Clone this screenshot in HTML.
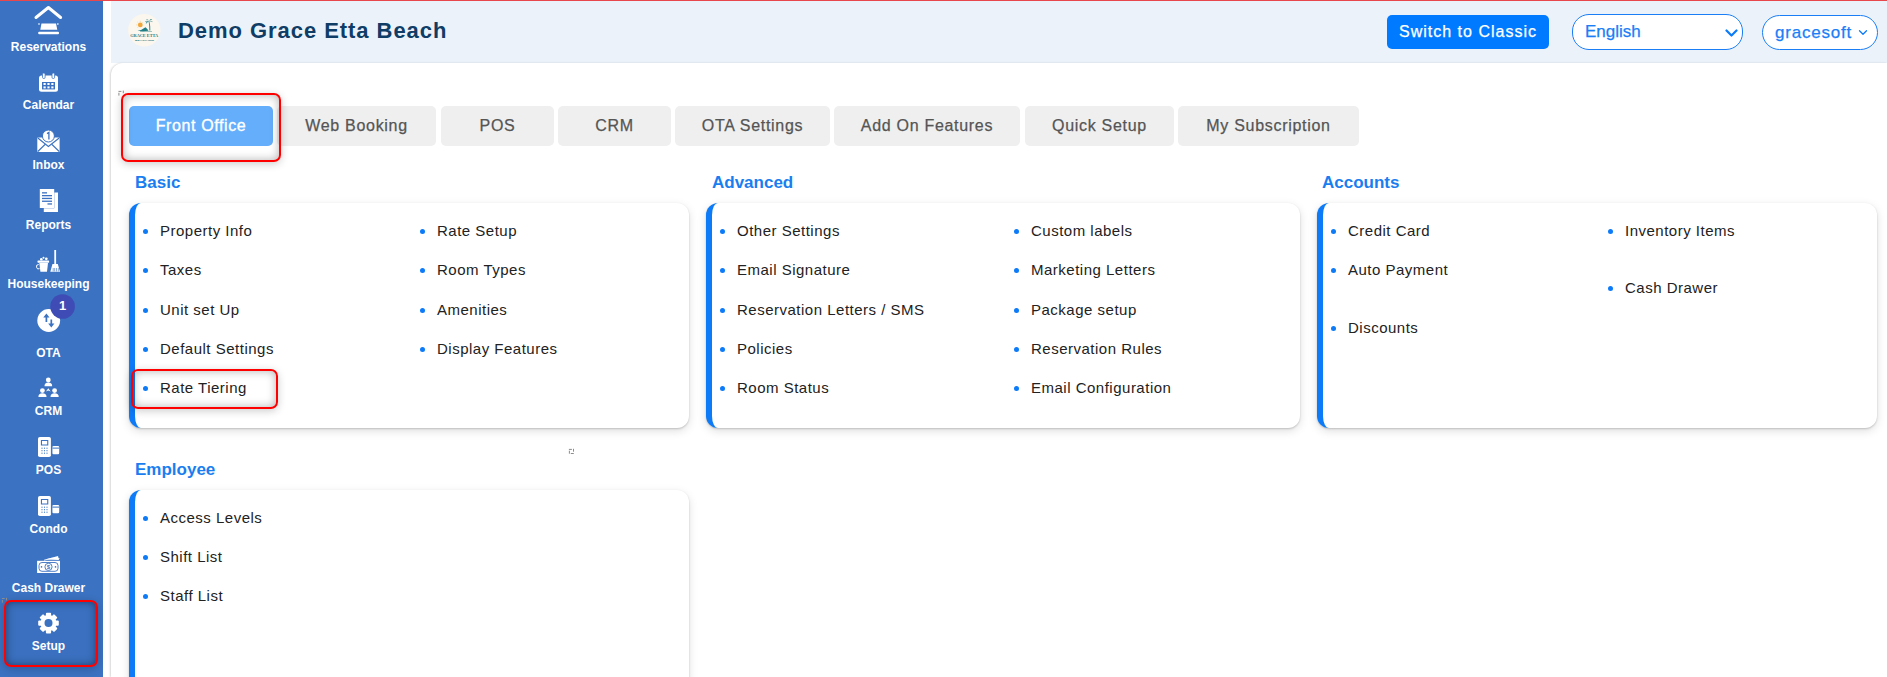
<!DOCTYPE html>
<html><head><meta charset="utf-8">
<style>
*{box-sizing:border-box;margin:0;padding:0}
html,body{width:1887px;height:677px;overflow:hidden;background:#fff;font-family:"Liberation Sans",sans-serif}
#top{position:absolute;left:0;top:0;width:1887px;height:1px;background:#e8474c}
#side{position:absolute;left:0;top:1px;width:103px;height:676px;background:#3b72c1}
.si{position:absolute;left:0;width:97px;text-align:center;color:#fff}
.si svg{position:absolute}
.lbl{position:absolute;left:0;width:97px;text-align:center;font-size:12px;font-weight:bold;color:#fff;line-height:14px;margin-top:1px}
#hdr{position:absolute;left:111px;top:1px;width:1776px;height:62px;background:#ecf2f9}
#main{position:absolute;left:111px;top:63px;width:1776px;height:614px;background:#fff;border-radius:12px 0 0 0;box-shadow:-1px 0 2px rgba(0,0,0,.16)}
.tab{position:absolute;top:106px;height:40px;background:#efefef;border-radius:5px;color:#555;font-size:16px;line-height:40px;text-align:center;letter-spacing:0.7px;-webkit-text-stroke:0.25px #555}
.sec{position:absolute;font-size:17px;font-weight:bold;color:#1a7ef0;line-height:20px}
.card{position:absolute;background:#fff;border-radius:12px;border-left:6px solid #0d7bf7;box-shadow:0 3px 10px rgba(0,0,0,.13),0 1px 2px rgba(0,0,0,.18)}
.it{position:absolute;font-size:15px;letter-spacing:0.5px;color:#222;line-height:18px;white-space:nowrap;margin-top:1px}
.it:before{content:"";position:absolute;left:-17px;top:7px;width:5px;height:5px;border-radius:50%;background:#0d7bf7}
.redbox{position:absolute;border:2.5px solid #ff0000;border-radius:7px;box-shadow:inset 0 0 10px rgba(0,0,0,.3),0 2px 8px rgba(0,0,0,.2)}
#title{position:absolute;left:178px;top:18px;font-size:22px;font-weight:bold;color:#0f3d66;letter-spacing:0.95px;line-height:26px;white-space:nowrap}
#sw{position:absolute;left:1387px;top:15px;width:162px;height:34px;background:#007bff;border-radius:5px;color:#fff;font-size:16px;line-height:34px;text-align:center;letter-spacing:1px;-webkit-text-stroke:0.25px #fff}
#lang{position:absolute;left:1572px;top:14px;width:171px;height:36px;background:#fff;border:1px solid #1a7ef7;border-radius:17px;color:#1a7ef7;font-size:17px;line-height:34px;padding-left:12px;-webkit-text-stroke:0.25px #1a7ef7}
#user{position:absolute;left:1762px;top:15px;width:116px;height:35px;background:#fff;border:1px solid #1a7ef7;border-radius:18px;color:#1a7ef7;font-size:17px;line-height:33px;padding-left:12px;letter-spacing:0.8px;-webkit-text-stroke:0.25px #1a7ef7}
#setupbox{position:absolute;left:5px;top:601px;width:92px;height:65px;border-radius:6px;background:#3a70bf;box-shadow:inset 0 0 6px rgba(0,0,0,.22)}
</style></head><body>
<div id="top"></div>
<div id="side"></div>
<svg style="position:absolute;left:0;top:0" width="103" height="677" viewBox="0 0 103 677">
<g fill="#fff" stroke="none">
<!-- reservations -->
<polyline points="36,17.5 48.4,7.5 60.6,17.5" fill="none" stroke="#fff" stroke-width="3" stroke-linecap="round" stroke-linejoin="round"/>
<path d="M41.5,23.5 H56 L57.3,29.8 H40.3 Z"/>
<rect x="38.2" y="31.8" width="20.8" height="2.4" rx="1"/>
<rect x="38.2" y="23.4" width="1.6" height="1.2"/><rect x="57" y="23.4" width="1.6" height="1.2"/>
<!-- calendar -->
<rect x="39" y="75.5" width="19" height="16.3" rx="2.5"/>
<rect x="42.5" y="73" width="2.6" height="5.5" rx="1.2" stroke="#3b72c1" stroke-width="0.8"/>
<rect x="52" y="73" width="2.6" height="5.5" rx="1.2" stroke="#3b72c1" stroke-width="0.8"/>
<rect x="42" y="82" width="13" height="7.4" fill="#3b72c1"/>
<rect x="43.5" y="83" width="2.2" height="2"/><rect x="47.4" y="83" width="2.2" height="2"/><rect x="51.3" y="83" width="2.2" height="2"/>
<rect x="43.5" y="86.4" width="2.2" height="2"/><rect x="47.4" y="86.4" width="2.2" height="2"/><rect x="51.3" y="86.4" width="2.2" height="2"/>
<!-- inbox -->
<rect x="37.3" y="137.5" width="22.3" height="14.5" rx="0.8"/>
<path d="M37.8,138 L48.4,146.5 L59.2,138 M37.8,151.5 L45,144.5 M59.2,151.5 L52,144.5" fill="none" stroke="#3b72c1" stroke-width="1.1"/>
<circle cx="48.4" cy="136" r="6" fill="#fff" stroke="#3b72c1" stroke-width="1"/>
<path d="M47,133.6 L48.9,132.4 V139.5" fill="none" stroke="#3b72c1" stroke-width="1.3"/>
<!-- reports -->
<path d="M54.3,192.5 H58 V212 H43.8 V208.2 H54.3 Z"/>
<rect x="39.8" y="189" width="14.4" height="19"/>
<g fill="#3b72c1"><rect x="42" y="192.2" width="5" height="1.3"/><rect x="42" y="195" width="10" height="1.3"/><rect x="42" y="197.8" width="10" height="1.3"/><rect x="42" y="200.6" width="10" height="1.3"/><rect x="47.5" y="203.3" width="4.5" height="1.3"/></g>
<!-- housekeeping -->
<path d="M39.3,262.9 H48 L47,271.8 H40.4 Z"/>
<rect x="37.5" y="260.5" width="11.6" height="2.2" rx="0.6"/>
<circle cx="41.3" cy="259.3" r="1.3"/><circle cx="43.5" cy="257.8" r="1"/><circle cx="46.3" cy="258.8" r="1.4"/>
<path d="M38.7,264.5 a2.2,2.2 0 1,0 0.9,4.2" fill="none" stroke="#fff" stroke-width="1"/>
<rect x="54.3" y="250" width="1.8" height="14.5"/>
<path d="M52.5,264 H57.8 L60,271.8 H50.3 Z"/>
<g fill="#3b72c1"><rect x="52.8" y="268" width="0.6" height="3.4"/><rect x="54.5" y="268" width="0.6" height="3.4"/><rect x="56.2" y="268" width="0.6" height="3.4"/><rect x="57.9" y="268" width="0.6" height="3.4"/></g>
<!-- ota -->
<circle cx="48.7" cy="320.5" r="11.4"/>
<path d="M46.4,322 V315.5 M51.3,319.5 V325.5" fill="none" stroke="#3b72c1" stroke-width="1.7"/><path d="M43.3,317.6 L46.4,313.6 L49.5,317.6 Z M48.2,323.6 L51.3,327.4 L54.4,323.6 Z" fill="#3b72c1"/>
<circle cx="62.6" cy="306.5" r="12.3" fill="#3f4cb5"/>
<!-- crm -->
<circle cx="48.3" cy="380" r="2.4"/>
<path d="M44.5,386.2 Q44.5,382.6 48.3,382.6 Q52.2,382.6 52.2,386.2 Z"/>
<circle cx="42.4" cy="390.6" r="2.4"/>
<path d="M38.4,397 Q38.4,393.3 42.4,393.3 Q46.5,393.3 46.5,397 Z"/>
<circle cx="54.6" cy="390.6" r="2.4"/>
<path d="M50.5,397 Q50.5,393.3 54.6,393.3 Q58.7,393.3 58.7,397 Z"/>
<path d="M45.9,391.6 L48.3,388.3 L50.7,391.6 L48.3,390.6 Z"/>
<!-- pos -->
<rect x="38" y="437" width="12.9" height="20" rx="1.8"/>
<rect x="40.9" y="440" width="7.4" height="5.5" fill="#3b72c1"/><rect x="42" y="441" width="5.2" height="3.5"/>
<g fill="#3b72c1"><circle cx="42" cy="448.2" r=".6"/><circle cx="44.5" cy="448.2" r=".6"/><circle cx="47" cy="448.2" r=".6"/><circle cx="42" cy="450.7" r=".6"/><circle cx="44.5" cy="450.7" r=".6"/><circle cx="47" cy="450.7" r=".6"/><circle cx="42" cy="453.2" r=".6"/><circle cx="44.5" cy="453.2" r=".6"/><circle cx="47" cy="453.2" r=".6"/></g>
<rect x="52.4" y="445.9" width="6.8" height="8.3" rx="1.2"/><rect x="52.4" y="447.6" width="6.8" height="1" fill="#3b72c1"/>
<!-- condo -->
<rect x="38" y="496" width="12.9" height="20" rx="1.8"/>
<rect x="40.9" y="499" width="7.4" height="5.5" fill="#3b72c1"/><rect x="42" y="500" width="5.2" height="3.5"/>
<g fill="#3b72c1"><circle cx="42" cy="507.2" r=".6"/><circle cx="44.5" cy="507.2" r=".6"/><circle cx="47" cy="507.2" r=".6"/><circle cx="42" cy="509.7" r=".6"/><circle cx="44.5" cy="509.7" r=".6"/><circle cx="47" cy="509.7" r=".6"/><circle cx="42" cy="512.2" r=".6"/><circle cx="44.5" cy="512.2" r=".6"/><circle cx="47" cy="512.2" r=".6"/></g>
<rect x="52.4" y="504.9" width="6.8" height="8.3" rx="1.2"/><rect x="52.4" y="506.6" width="6.8" height="1" fill="#3b72c1"/>
<!-- cash drawer -->
<path d="M45,559.5 L58,556 L59,560 Z" />
<path d="M44,560.2 Q52,557.2 59.5,558.6" fill="none" stroke="#fff" stroke-width="0.8"/>
<rect x="37.1" y="560.8" width="22.9" height="12.2"/>
<rect x="39" y="562.5" width="19" height="8.8" rx="3" fill="none" stroke="#3b72c1" stroke-width="0.9"/>
<circle cx="48.5" cy="566.9" r="3.6" fill="#fff" stroke="#3b72c1" stroke-width="0.9"/>
<text x="48.5" y="569.3" font-size="6" font-weight="bold" text-anchor="middle" fill="#3b72c1" font-family="Liberation Sans">$</text>
<circle cx="41.5" cy="566.9" r=".8" fill="#3b72c1"/><circle cx="55.5" cy="566.9" r=".8" fill="#3b72c1"/>
</g>
</svg>
<div id="setupbox"></div>
<svg style="position:absolute;left:36px;top:611px" width="25" height="25" viewBox="0 0 25 25">
<g transform="translate(12.5,12.1)">
<g fill="#fff">
<rect x="-2.6" y="-10.3" width="5.2" height="20.6" rx="1"/>
<rect x="-2.6" y="-10.3" width="5.2" height="20.6" rx="1" transform="rotate(45)"/>
<rect x="-2.6" y="-10.3" width="5.2" height="20.6" rx="1" transform="rotate(90)"/>
<rect x="-2.6" y="-10.3" width="5.2" height="20.6" rx="1" transform="rotate(135)"/>
<circle r="8"/>
</g>
<circle r="4" fill="#3b72c1"/>
</g>
</svg>
<div class="lbl" style="top:39px">Reservations</div>
<div class="lbl" style="top:97px">Calendar</div>
<div class="lbl" style="top:157px">Inbox</div>
<div class="lbl" style="top:217px">Reports</div>
<div class="lbl" style="top:276px">Housekeeping</div>
<div class="lbl" style="top:298px;left:56px;width:13px;font-size:13px">1</div>
<div class="lbl" style="top:345px">OTA</div>
<div class="lbl" style="top:403px">CRM</div>
<div class="lbl" style="top:462px">POS</div>
<div class="lbl" style="top:521px">Condo</div>
<div class="lbl" style="top:580px">Cash Drawer</div>
<div class="lbl" style="top:638px">Setup</div>
<div class="redbox" style="left:3.6px;top:599.8px;width:94px;height:67.4px;border-radius:7px"></div>
<div id="hdr"></div>
<svg style="position:absolute;left:128px;top:14px" width="33" height="33" viewBox="0 0 33 33">
<circle cx="16.3" cy="16.3" r="16.2" fill="#fbf6ee"/>
<circle cx="12.3" cy="10.9" r="2.4" fill="#f2a63a"/>
<g stroke="#f5c27c" stroke-width="0.6"><path d="M12.3,6.8 V7.8 M8.2,10.9 H9.2 M9.4,8 L10.1,8.7 M15.2,8 L14.5,8.7 M9.4,13.8 L10.1,13.1"/></g>
<g fill="#1f7d84">
<path d="M20.6,7.2 Q21.6,12 21.4,16.6 L22.3,16.6 Q22.6,12 21.3,7.2 Z"/>
<path d="M21,7.3 Q18.5,5.8 16.8,8.2 Q18.8,6.9 21,7.3 Z M21,7.3 Q23.5,5.6 25,8.3 Q23,6.8 21,7.3 Z M21,7.3 Q19.8,4.4 18,5.2 Q20,5.2 21,7.3 Z M21,7.3 Q22.5,4.2 24.3,5.4 Q22.4,5.3 21,7.3 Z M21,7.3 Q18,7.5 17.8,10 Q19,8.2 21,7.3 Z"/>
<path d="M9.5,16.8 Q14,16 17.5,13.2 Q19.5,15 20.5,16.8 Q15,17.6 9.5,16.8 Z"/>
<rect x="12" y="17" width="12" height="0.6" opacity="0.7"/>
<text x="16.2" y="23" font-family="Liberation Serif" font-size="4.6" font-weight="bold" text-anchor="middle" textLength="28" lengthAdjust="spacingAndGlyphs">GRACE ETTA</text>
<text x="16.5" y="27" font-family="Liberation Sans" font-size="2.4" font-weight="bold" text-anchor="middle" textLength="19" lengthAdjust="spacingAndGlyphs">BEACH INN</text>
</g>
</svg>
<div id="title">Demo Grace Etta Beach</div>
<div id="sw">Switch to Classic</div>
<div id="lang">English<svg style="position:absolute;left:152px;top:14px" width="14" height="9" viewBox="0 0 14 9"><polyline points="1.5,1.5 6.5,6.5 11.5,1.5" fill="none" stroke="#0d7bf7" stroke-width="2.2" stroke-linecap="round" stroke-linejoin="round"/></svg></div>
<div id="user">gracesoft<svg style="position:absolute;left:95px;top:13px" width="11" height="8" viewBox="0 0 11 8"><polyline points="1.5,1.8 5,5.3 8.5,1.8" fill="none" stroke="#0d7bf7" stroke-width="1.3" stroke-linecap="round" stroke-linejoin="round"/></svg></div>
<div id="main"></div>

<div class="tab" style="left:129px;width:144px;background:#64aefb;color:#fff;letter-spacing:0.6px;-webkit-text-stroke:0.35px #fff">Front Office</div>
<div class="tab" style="left:277px;width:159px">Web Booking</div>
<div class="tab" style="left:441px;width:113px">POS</div>
<div class="tab" style="left:558px;width:113px">CRM</div>
<div class="tab" style="left:675px;width:155px">OTA Settings</div>
<div class="tab" style="left:834px;width:186px">Add On Features</div>
<div class="tab" style="left:1025px;width:149px">Quick Setup</div>
<div class="tab" style="left:1178px;width:181px">My Subscription</div>
<div class="redbox" style="left:121px;top:92.5px;width:159.5px;height:69px"></div>

<div class="sec" style="left:135px;top:173px">Basic</div>
<div class="sec" style="left:712px;top:173px">Advanced</div>
<div class="sec" style="left:1322px;top:173px">Accounts</div>
<div class="sec" style="left:135px;top:460px">Employee</div>

<div class="card" style="left:129px;top:203px;width:560px;height:225px"></div>
<div class="card" style="left:706px;top:203px;width:594px;height:225px"></div>
<div class="card" style="left:1317px;top:203px;width:560px;height:225px"></div>
<div class="card" style="left:129px;top:490px;width:560px;height:200px"></div>

<div class="it" style="left:160px;top:221px">Property Info</div>
<div class="it" style="left:160px;top:260px">Taxes</div>
<div class="it" style="left:160px;top:300px">Unit set Up</div>
<div class="it" style="left:160px;top:339px">Default Settings</div>
<div class="it" style="left:160px;top:378px">Rate Tiering</div>
<div class="it" style="left:437px;top:221px">Rate Setup</div>
<div class="it" style="left:437px;top:260px">Room Types</div>
<div class="it" style="left:437px;top:300px">Amenities</div>
<div class="it" style="left:437px;top:339px">Display Features</div>
<div class="redbox" style="left:131px;top:369px;width:147px;height:40px"></div>

<div class="it" style="left:737px;top:221px">Other Settings</div>
<div class="it" style="left:737px;top:260px">Email Signature</div>
<div class="it" style="left:737px;top:300px">Reservation Letters / SMS</div>
<div class="it" style="left:737px;top:339px">Policies</div>
<div class="it" style="left:737px;top:378px">Room Status</div>
<div class="it" style="left:1031px;top:221px">Custom labels</div>
<div class="it" style="left:1031px;top:260px">Marketing Letters</div>
<div class="it" style="left:1031px;top:300px">Package setup</div>
<div class="it" style="left:1031px;top:339px">Reservation Rules</div>
<div class="it" style="left:1031px;top:378px">Email Configuration</div>

<div class="it" style="left:1348px;top:221px">Credit Card</div>
<div class="it" style="left:1348px;top:260px">Auto Payment</div>
<div class="it" style="left:1348px;top:318px">Discounts</div>
<div class="it" style="left:1625px;top:221px">Inventory Items</div>
<div class="it" style="left:1625px;top:278px">Cash Drawer</div>

<div class="it" style="left:160px;top:508px">Access Levels</div>
<div class="it" style="left:160px;top:547px">Shift List</div>
<div class="it" style="left:160px;top:586px">Staff List</div>
<svg style="position:absolute;left:0;top:0;pointer-events:none" width="1887" height="677" viewBox="0 0 1887 677">
<g stroke="#555" stroke-width="0.8" stroke-linecap="round" opacity="0.85">
<path d="M118.9,91.4 H121 M123.3,91 V92.8 M118.9,93.2 V95.2"/>
<path d="M569.3,449.4 H571.5 M573.5,449.2 V451.3 M569.4,451.1 V453.3 M571.2,453.5 H573.4"/>
</g>
<g stroke="#c9a36a" stroke-width="0.8" stroke-linecap="round" opacity="0.7">
<path d="M2.3,598.5 H4.3 M6.5,598.2 V600 M2.4,600.4 V602.4"/>
</g>
</svg>
</body></html>
